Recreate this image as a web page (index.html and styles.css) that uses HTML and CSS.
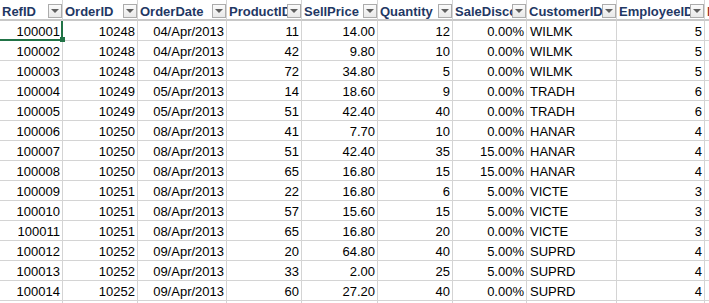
FILE: index.html
```html
<!DOCTYPE html>
<html>
<head>
<meta charset="utf-8">
<link rel="stylesheet" href="styles.css">
</head>
<body>
<div class="sheet">
  <div class="grid">
    <div class="hd"><span class="lbl">RefID</span><span class="dd"></span></div>
    <div class="hd"><span class="lbl">OrderID</span><span class="dd"></span></div>
    <div class="hd"><span class="lbl">OrderDate</span><span class="dd"></span></div>
    <div class="hd"><span class="lbl">ProductID</span><span class="dd"></span></div>
    <div class="hd"><span class="lbl">SellPrice</span><span class="dd"></span></div>
    <div class="hd"><span class="lbl">Quantity</span><span class="dd"></span></div>
    <div class="hd"><span class="lbl">SaleDiscount</span><span class="dd"></span></div>
    <div class="hd"><span class="lbl">CustomerID</span><span class="dd"></span></div>
    <div class="hd"><span class="lbl">EmployeeID</span><span class="dd"></span></div>
    <div class="hd"><span class="lbl red">Freight</span></div>

    <div class="c n">100001</div><div class="c n">10248</div><div class="c n">04/Apr/2013</div><div class="c n">11</div><div class="c n">14.00</div><div class="c n">12</div><div class="c n">0.00%</div><div class="c t">WILMK</div><div class="c n">5</div><div class="c"></div>
    <div class="c n">100002</div><div class="c n">10248</div><div class="c n">04/Apr/2013</div><div class="c n">42</div><div class="c n">9.80</div><div class="c n">10</div><div class="c n">0.00%</div><div class="c t">WILMK</div><div class="c n">5</div><div class="c"></div>
    <div class="c n">100003</div><div class="c n">10248</div><div class="c n">04/Apr/2013</div><div class="c n">72</div><div class="c n">34.80</div><div class="c n">5</div><div class="c n">0.00%</div><div class="c t">WILMK</div><div class="c n">5</div><div class="c"></div>
    <div class="c n">100004</div><div class="c n">10249</div><div class="c n">05/Apr/2013</div><div class="c n">14</div><div class="c n">18.60</div><div class="c n">9</div><div class="c n">0.00%</div><div class="c t">TRADH</div><div class="c n">6</div><div class="c"></div>
    <div class="c n">100005</div><div class="c n">10249</div><div class="c n">05/Apr/2013</div><div class="c n">51</div><div class="c n">42.40</div><div class="c n">40</div><div class="c n">0.00%</div><div class="c t">TRADH</div><div class="c n">6</div><div class="c"></div>
    <div class="c n">100006</div><div class="c n">10250</div><div class="c n">08/Apr/2013</div><div class="c n">41</div><div class="c n">7.70</div><div class="c n">10</div><div class="c n">0.00%</div><div class="c t">HANAR</div><div class="c n">4</div><div class="c"></div>
    <div class="c n">100007</div><div class="c n">10250</div><div class="c n">08/Apr/2013</div><div class="c n">51</div><div class="c n">42.40</div><div class="c n">35</div><div class="c n">15.00%</div><div class="c t">HANAR</div><div class="c n">4</div><div class="c"></div>
    <div class="c n">100008</div><div class="c n">10250</div><div class="c n">08/Apr/2013</div><div class="c n">65</div><div class="c n">16.80</div><div class="c n">15</div><div class="c n">15.00%</div><div class="c t">HANAR</div><div class="c n">4</div><div class="c"></div>
    <div class="c n">100009</div><div class="c n">10251</div><div class="c n">08/Apr/2013</div><div class="c n">22</div><div class="c n">16.80</div><div class="c n">6</div><div class="c n">5.00%</div><div class="c t">VICTE</div><div class="c n">3</div><div class="c"></div>
    <div class="c n">100010</div><div class="c n">10251</div><div class="c n">08/Apr/2013</div><div class="c n">57</div><div class="c n">15.60</div><div class="c n">15</div><div class="c n">5.00%</div><div class="c t">VICTE</div><div class="c n">3</div><div class="c"></div>
    <div class="c n">100011</div><div class="c n">10251</div><div class="c n">08/Apr/2013</div><div class="c n">65</div><div class="c n">16.80</div><div class="c n">20</div><div class="c n">0.00%</div><div class="c t">VICTE</div><div class="c n">3</div><div class="c"></div>
    <div class="c n">100012</div><div class="c n">10252</div><div class="c n">09/Apr/2013</div><div class="c n">20</div><div class="c n">64.80</div><div class="c n">40</div><div class="c n">5.00%</div><div class="c t">SUPRD</div><div class="c n">4</div><div class="c"></div>
    <div class="c n">100013</div><div class="c n">10252</div><div class="c n">09/Apr/2013</div><div class="c n">33</div><div class="c n">2.00</div><div class="c n">25</div><div class="c n">5.00%</div><div class="c t">SUPRD</div><div class="c n">4</div><div class="c"></div>
    <div class="c n">100014</div><div class="c n">10252</div><div class="c n">09/Apr/2013</div><div class="c n">60</div><div class="c n">27.20</div><div class="c n">40</div><div class="c n">0.00%</div><div class="c t">SUPRD</div><div class="c n">4</div><div class="c"></div>
    <div class="c"></div><div class="c"></div><div class="c"></div><div class="c"></div><div class="c"></div><div class="c"></div><div class="c"></div><div class="c"></div><div class="c"></div><div class="c"></div>
  </div>
  <div class="sel"></div>
  <div class="handle"></div>
</div>
</body>
</html>
```
FILE: styles.css
```css
html, body {
  margin: 0;
  padding: 0;
  background: #ffffff;
  overflow: hidden;
}
.sheet {
  position: relative;
  width: 709px;
  height: 303px;
  overflow: hidden;
  font-family: "Liberation Sans", Arial, sans-serif;
  font-size: 13px;
  color: #000000;
}
.grid {
  display: grid;
  grid-template-columns: 63px 75px 89px 75px 76px 75px 74px 90px 88px 40px;
  width: 685px;
}
.hd {
  box-sizing: border-box;
  height: 21px;
  display: flex;
  align-items: flex-start;
  border-right: 1px solid #d4d4d4;
  border-bottom: 2px solid #c8c8c8;
  overflow: hidden;
}
.lbl {
  flex: 1 1 auto;
  min-width: 0;
  overflow: hidden;
  white-space: nowrap;
  font-weight: bold;
  color: #1f3864;
  line-height: 15px;
  padding: 4px 0 0 2px;
}
.lbl.red {
  color: #943634;
}
.dd {
  flex: 0 0 auto;
  box-sizing: border-box;
  width: 14px;
  height: 14px;
  margin-top: 4px;
  border: 1px solid #acacac;
  background: linear-gradient(#fbfbfb, #e9e9e9);
  position: relative;
}
.dd::after {
  content: "";
  position: absolute;
  left: 2px;
  top: 4px;
  border-left: 4px solid transparent;
  border-right: 4px solid transparent;
  border-top: 4px solid #5f5f5f;
}
.c {
  box-sizing: border-box;
  height: 20px;
  border-right: 1px solid #d4d4d4;
  border-bottom: 1px solid #d4d4d4;
  line-height: 15px;
  padding: 3px 2px 0 3px;
  white-space: nowrap;
  overflow: hidden;
}
.c.n {
  text-align: right;
}
.c.t {
  text-align: left;
}
.sel {
  position: absolute;
  left: 0;
  top: 21px;
  width: 63px;
  height: 20px;
  box-sizing: border-box;
  border-right: 2px solid #217346;
  border-bottom: 2px solid #217346;
}
.handle {
  position: absolute;
  left: 60px;
  top: 37px;
  width: 5px;
  height: 5px;
  background: #217346;
}
```
